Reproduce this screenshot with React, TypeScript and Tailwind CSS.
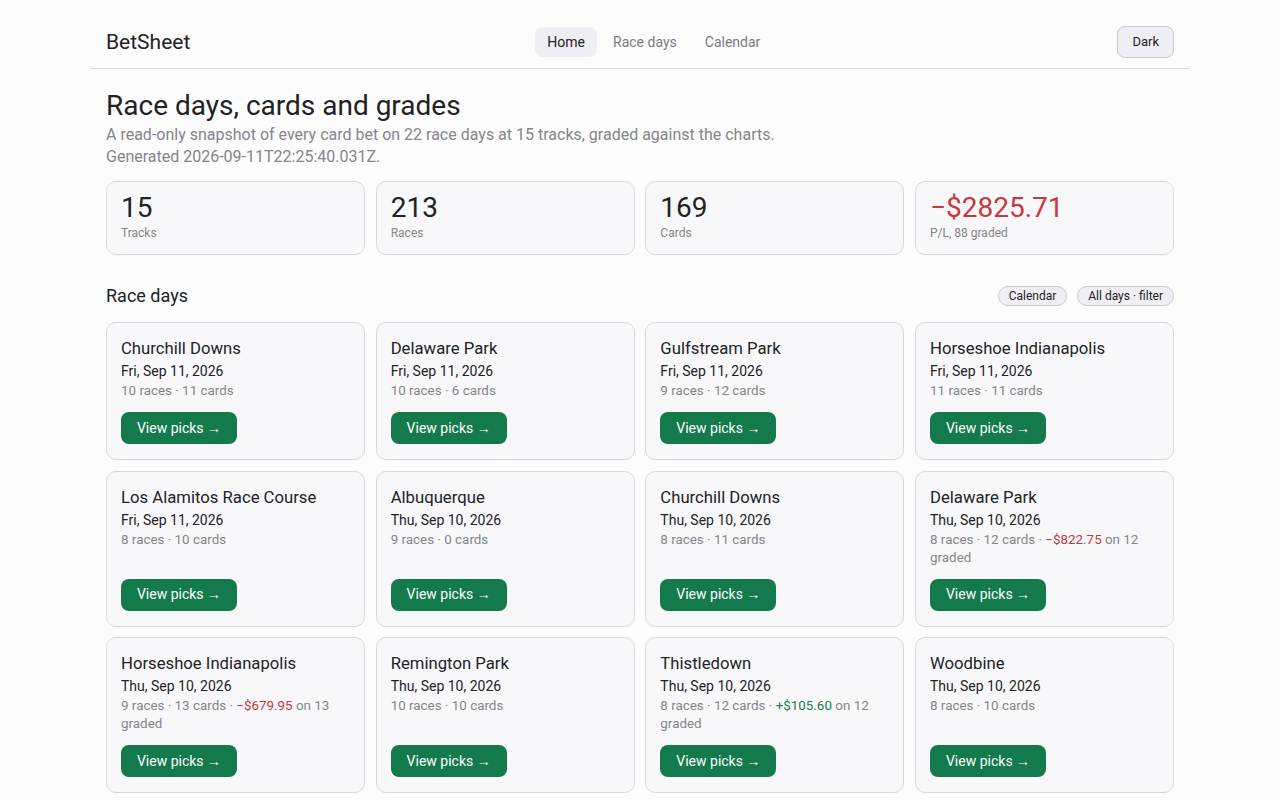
import React from "react";

type Day = { track: string; date: string; races: number; cards: number; pl?: string; plPos?: boolean; graded?: number };

const days: Day[] = [
  { track: "Churchill Downs", date: "Fri, Sep 11, 2026", races: 10, cards: 11 },
  { track: "Delaware Park", date: "Fri, Sep 11, 2026", races: 10, cards: 6 },
  { track: "Gulfstream Park", date: "Fri, Sep 11, 2026", races: 9, cards: 12 },
  { track: "Horseshoe Indianapolis", date: "Fri, Sep 11, 2026", races: 11, cards: 11 },
  { track: "Los Alamitos Race Course", date: "Fri, Sep 11, 2026", races: 8, cards: 10 },
  { track: "Albuquerque", date: "Thu, Sep 10, 2026", races: 9, cards: 0 },
  { track: "Churchill Downs", date: "Thu, Sep 10, 2026", races: 8, cards: 11 },
  { track: "Delaware Park", date: "Thu, Sep 10, 2026", races: 8, cards: 12, pl: "\u2212$822.75", plPos: false, graded: 12 },
  { track: "Horseshoe Indianapolis", date: "Thu, Sep 10, 2026", races: 9, cards: 13, pl: "\u2212$679.95", plPos: false, graded: 13 },
  { track: "Remington Park", date: "Thu, Sep 10, 2026", races: 10, cards: 10 },
  { track: "Thistledown", date: "Thu, Sep 10, 2026", races: 8, cards: 12, pl: "+$105.60", plPos: true, graded: 12 },
  { track: "Woodbine", date: "Thu, Sep 10, 2026", races: 8, cards: 10 },
];

const stats = [
  { value: "15", label: "Tracks" },
  { value: "213", label: "Races" },
  { value: "169", label: "Cards" },
  { value: "\u2212$2825.71", label: "P/L, 88 graded", red: true },
];

export default function App() {
  return (
    <div className="min-h-screen bg-[#fcfcfd] text-[#222226]" style={{ fontFamily: "Roboto, 'Liberation Sans', sans-serif" }}>
      <div className="mx-auto w-[1100px]">
        <header className="flex h-[69px] items-end justify-between border-b border-[#d9d9dd] px-4 pb-[10px]">
          <div className="flex h-8 items-center text-[21px] leading-none text-[#222226]">BetSheet</div>
          <nav className="flex h-8 items-center gap-1 text-[14px]">
            <a className="rounded-lg bg-[#efeef2] px-3 py-[7px] leading-4 text-[#222226]">Home</a>
            <a className="rounded-lg px-3 py-[7px] leading-4 text-[#7b7b82]">Race days</a>
            <a className="rounded-lg px-3 py-[7px] leading-4 text-[#7b7b82]">Calendar</a>
          </nav>
          <button className="h-8 rounded-lg border border-[#c9c9cf] bg-[#efeef2] px-[14px] text-[13px] text-[#222226]">Dark</button>
        </header>

        <main className="px-4">
          <h1 className="mt-[21px] text-[28px] leading-[32px] text-[#222226]">Race days, cards and grades</h1>
          <p className="mt-[2px] text-[16px] leading-[22px] text-[#85858c]">
            A read-only snapshot of every card bet on 22 race days at 15 tracks, graded against the charts.
            <br />
            Generated 2026-09-11T22:25:40.031Z.
          </p>

          <div className="mt-[13px] grid grid-cols-4 gap-[10.7px]">
            {stats.map((s) => (
              <div key={s.label} className="h-[74px] rounded-[10px] border border-[#d9d9dd] bg-[#f8f8fa] px-[14px] pt-[9px]">
                <div className={`text-[28px] leading-[34px] ${s.red ? "text-[#c8383d]" : "text-[#222226]"}`}>{s.value}</div>
                <div className="mt-[1px] text-[12px] leading-[14px] text-[#85858c]">{s.label}</div>
              </div>
            ))}
          </div>

          <div className="mt-[29px] flex items-center justify-between">
            <h2 className="text-[18px] leading-[24px] text-[#222226]">Race days</h2>
            <div className="flex gap-[10px]">
              <span className="rounded-full border border-[#c9c9cf] bg-[#efeef2] px-[10px] py-[2px] text-[12px] leading-[14px] text-[#222226]">Calendar</span>
              <span className="rounded-full border border-[#c9c9cf] bg-[#efeef2] px-[10px] py-[2px] text-[12px] leading-[14px] text-[#222226]">All days · filter</span>
            </div>
          </div>

          <div className="mt-[14px] grid grid-cols-4 gap-[10.7px]">
            {days.map((d, i) => (
              <div key={i} className="flex flex-col rounded-[10px] border border-[#d9d9dd] bg-[#f8f8fa] px-[14px] pb-[15px] pt-[15px]">
                <div className="text-[16.7px] leading-[22px] text-[#222226]">{d.track}</div>
                <div className="mt-[1px] text-[14px] leading-[20px] text-[#222226]">{d.date}</div>
                <div className="mb-[12px] mt-[1px] text-[13.4px] leading-[18px] text-[#85858c]">
                  {d.races} races · {d.cards} cards
                  {d.pl && (
                    <>
                      {" · "}
                      <span className={d.plPos ? "text-[#17804d]" : "text-[#c8383d]"}>{d.pl}</span> on {d.graded} graded
                    </>
                  )}
                </div>
                <div className="mt-auto">
                  <button className="h-8 w-[116px] rounded-lg bg-[#137a4c] text-[14px] text-white">View picks →</button>
                </div>
              </div>
            ))}
          </div>
        </main>
      </div>
    </div>
  );
}
